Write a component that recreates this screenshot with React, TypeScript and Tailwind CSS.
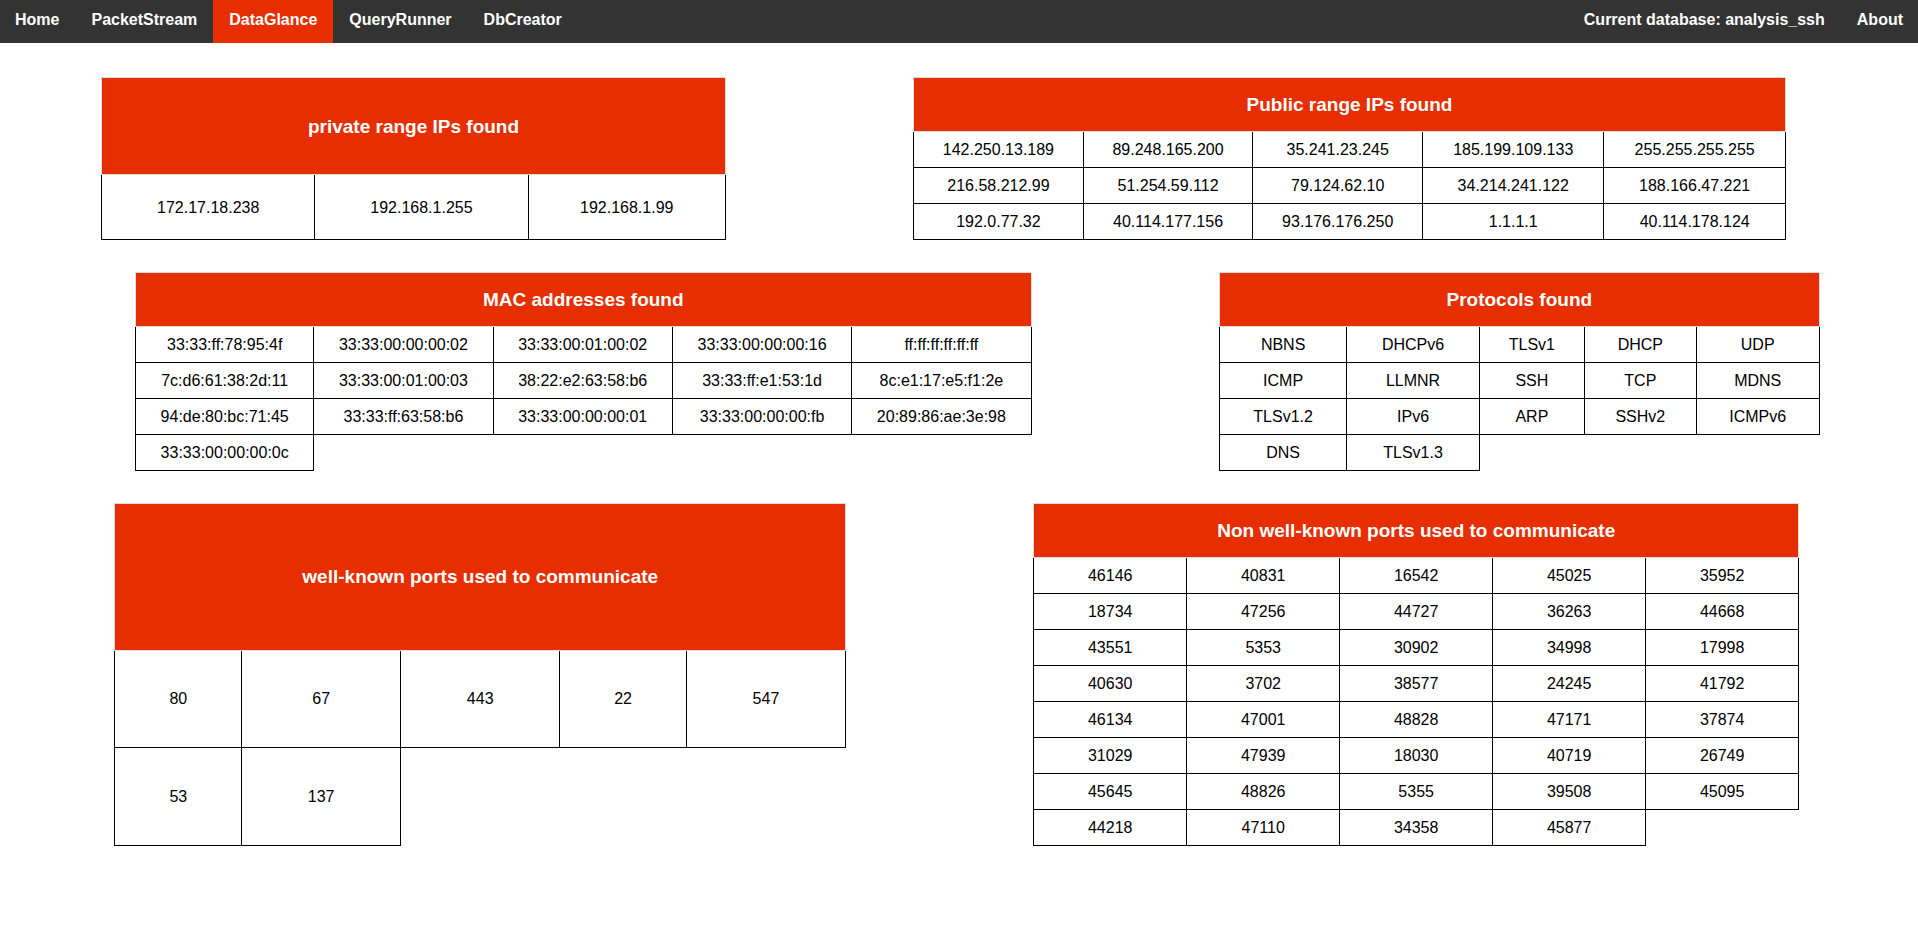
type Grid = { title: string; rows: string[][]; columns: number; share: string };

const sections: [Grid, Grid][] = [
  [
    {
      title: "private range IPs found",
      columns: 3,
      share: "flex-[781]",
      rows: [["172.17.18.238", "192.168.1.255", "192.168.1.99"]],
    },
    {
      title: "Public range IPs found",
      columns: 5,
      share: "flex-[1091]",
      rows: [
        ["142.250.13.189", "89.248.165.200", "35.241.23.245", "185.199.109.133", "255.255.255.255"],
        ["216.58.212.99", "51.254.59.112", "79.124.62.10", "34.214.241.122", "188.166.47.221"],
        ["192.0.77.32", "40.114.177.156", "93.176.176.250", "1.1.1.1", "40.114.178.124"],
      ],
    },
  ],
  [
    {
      title: "MAC addresses found",
      columns: 5,
      share: "flex-[1120]",
      rows: [
        ["33:33:ff:78:95:4f", "33:33:00:00:00:02", "33:33:00:01:00:02", "33:33:00:00:00:16", "ff:ff:ff:ff:ff:ff"],
        ["7c:d6:61:38:2d:11", "33:33:00:01:00:03", "38:22:e2:63:58:b6", "33:33:ff:e1:53:1d", "8c:e1:17:e5:f1:2e"],
        ["94:de:80:bc:71:45", "33:33:ff:63:58:b6", "33:33:00:00:00:01", "33:33:00:00:00:fb", "20:89:86:ae:3e:98"],
        ["33:33:00:00:00:0c"],
      ],
    },
    {
      title: "Protocols found",
      columns: 5,
      share: "flex-[751]",
      rows: [
        ["NBNS", "DHCPv6", "TLSv1", "DHCP", "UDP"],
        ["ICMP", "LLMNR", "SSH", "TCP", "MDNS"],
        ["TLSv1.2", "IPv6", "ARP", "SSHv2", "ICMPv6"],
        ["DNS", "TLSv1.3"],
      ],
    },
  ],
  [
    {
      title: "well-known ports used to communicate",
      columns: 5,
      share: "flex-[914]",
      rows: [
        ["80", "67", "443", "22", "547"],
        ["53", "137"],
      ],
    },
    {
      title: "Non well-known ports used to communicate",
      columns: 5,
      share: "flex-[957]",
      rows: [
        ["46146", "40831", "16542", "45025", "35952"],
        ["18734", "47256", "44727", "36263", "44668"],
        ["43551", "5353", "30902", "34998", "17998"],
        ["40630", "3702", "38577", "24245", "41792"],
        ["46134", "47001", "48828", "47171", "37874"],
        ["31029", "47939", "18030", "40719", "26749"],
        ["45645", "48826", "5355", "39508", "45095"],
        ["44218", "47110", "34358", "45877"],
      ],
    },
  ],
];

const links = ["Home", "PacketStream", "DataGlance", "QueryRunner", "DbCreator"];

// The title row sits in the body so that it shares spare height with the data rows.
function DataTable({ title, rows, columns }: Grid) {
  return (
    <table className="mx-auto h-full w-4/5 border-collapse text-center text-black">
      <tbody>
        <tr>
          <th
            colSpan={columns}
            className="border border-[#dddddd] bg-[#e62e00] px-2 py-4 text-[19px] leading-[21px] font-bold text-white"
          >
            {title}
          </th>
        </tr>
        {rows.map((row) => (
          <tr key={row[0]}>
            {row.map((value) => (
              <td key={value} className="border border-black p-2 leading-[19px]">
                {value}
              </td>
            ))}
          </tr>
        ))}
      </tbody>
    </table>
  );
}

export default function App() {
  return (
    <div className="min-h-screen bg-white font-['Liberation_Sans',Arial,sans-serif] text-base">
      <nav className="flex justify-between bg-[#333333] leading-[18px] font-bold text-white">
        <div className="flex">
          {links.map((name) => (
            <a
              key={name}
              href="#"
              aria-current={name === "DataGlance" ? "page" : undefined}
              className="px-4 pt-[11px] pb-[14px] first:pl-[15px] aria-[current=page]:bg-[#e62e00]"
            >
              {name}
            </a>
          ))}
        </div>
        <div className="flex">
          <span className="px-4 pt-[11px] pb-[14px]">Current database: analysis_ssh</span>
          <a href="#" className="pt-[11px] pr-[15px] pb-[14px] pl-4">
            About
          </a>
        </div>
      </nav>
      <main className="flex flex-col gap-8 px-[23px] pt-[34px] pb-8">
        {sections.map((pair) => (
          <section key={pair[0].title} className="flex">
            {pair.map((grid) => (
              <div key={grid.title} className={grid.share}>
                <DataTable {...grid} />
              </div>
            ))}
          </section>
        ))}
      </main>
    </div>
  );
}
